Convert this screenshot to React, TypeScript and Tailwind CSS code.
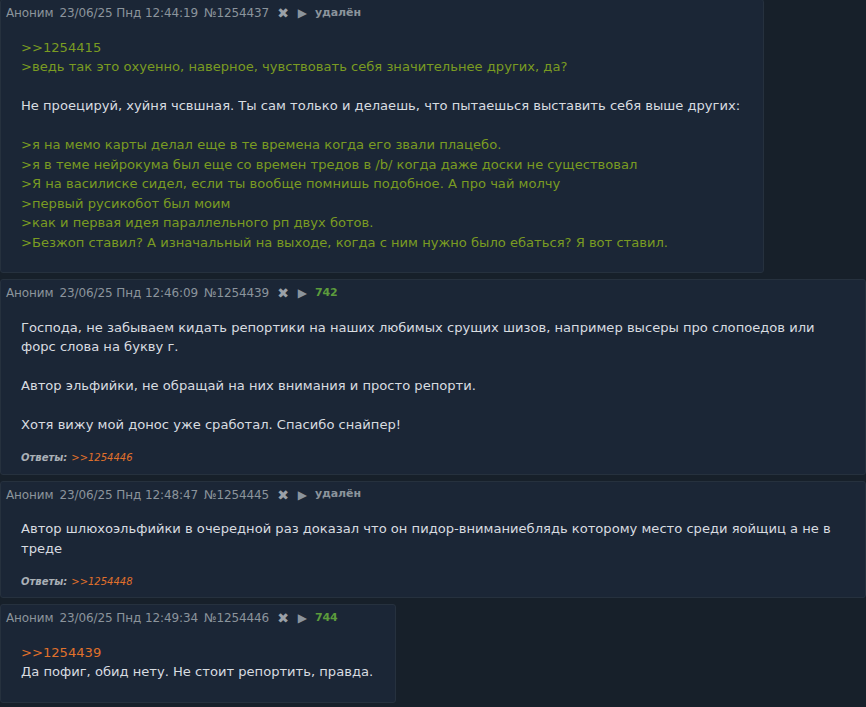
import type { ReactNode } from 'react'

type Line = { kind: 'text' | 'quote' | 'link' | 'blank'; text?: string }

type PostData = {
  num: string
  date: string
  status: { kind: 'deleted' } | { kind: 'count'; value: string }
  width: string
  lines: Line[]
  replies?: string[]
}

const posts: PostData[] = [
  {
    num: '1254437',
    date: '23/06/25 Пнд 12:44:19',
    status: { kind: 'deleted' },
    width: 'w-[764px]',
    lines: [
      { kind: 'quote', text: '>>1254415' },
      { kind: 'quote', text: '>ведь так это охуенно, наверное, чувствовать себя значительнее других, да?' },
      { kind: 'blank' },
      { kind: 'text', text: 'Не проецируй, хуйня чсвшная. Ты сам только и делаешь, что пытаешься выставить себя выше других:' },
      { kind: 'blank' },
      { kind: 'quote', text: '>я на мемо карты делал еще в те времена когда его звали плацебо.' },
      { kind: 'quote', text: '>я в теме нейрокума был еще со времен тредов в /b/ когда даже доски не существовал' },
      { kind: 'quote', text: '>Я на василиске сидел, если ты вообще помнишь подобное. А про чай молчу' },
      { kind: 'quote', text: '>первый русикобот был моим' },
      { kind: 'quote', text: '>как и первая идея параллельного рп двух ботов.' },
      { kind: 'quote', text: '>Безжоп ставил? А изначальный на выходе, когда с ним нужно было ебаться? Я вот ставил.' },
    ],
  },
  {
    num: '1254439',
    date: '23/06/25 Пнд 12:46:09',
    status: { kind: 'count', value: '742' },
    width: 'w-full',
    lines: [
      { kind: 'text', text: 'Господа, не забываем кидать репортики на наших любимых срущих шизов, например высеры про слопоедов или' },
      { kind: 'text', text: 'форс слова на букву г.' },
      { kind: 'blank' },
      { kind: 'text', text: 'Автор эльфийки, не обращай на них внимания и просто репорти.' },
      { kind: 'blank' },
      { kind: 'text', text: 'Хотя вижу мой донос уже сработал. Спасибо снайпер!' },
    ],
    replies: ['>>1254446'],
  },
  {
    num: '1254445',
    date: '23/06/25 Пнд 12:48:47',
    status: { kind: 'deleted' },
    width: 'w-full',
    lines: [
      { kind: 'text', text: 'Автор шлюхоэльфийки в очередной раз доказал что он пидор-вниманиеблядь которому место среди яойщиц а не в' },
      { kind: 'text', text: 'треде' },
    ],
    replies: ['>>1254448'],
  },
  {
    num: '1254446',
    date: '23/06/25 Пнд 12:49:34',
    status: { kind: 'count', value: '744' },
    width: 'w-[396px]',
    lines: [
      { kind: 'link', text: '>>1254439' },
      { kind: 'text', text: 'Да пофиг, обид нету. Не стоит репортить, правда.' },
    ],
  },
]

function BodyLine({ line }: { line: Line }) {
  if (line.kind === 'blank') return <div className="h-[19.5px]" />
  const color =
    line.kind === 'quote' ? 'text-[#7a9b22]' : line.kind === 'link' ? 'text-[#e0712b]' : 'text-[#d8dce0]'
  return <div className={`${color} whitespace-pre`}>{line.text}</div>
}

function Header({ post }: { post: PostData }): ReactNode {
  return (
    <div className="flex items-center gap-[6px] px-[5px] pt-[3px] h-[23px] text-[12px] tracking-[-0.1px] text-[#8b949c]">
      <span>Аноним</span>
      <span>{post.date}</span>
      <span>№{post.num}</span>
      <span className="text-[14px] leading-none text-[#9aa1a8] font-bold ml-[2px]">✖</span>
      <span className="text-[12px] leading-none text-[#8b949c] ml-[3px]">▶</span>
      {post.status.kind === 'deleted' ? (
        <span className="font-bold text-[#8b949c] text-[11px] ml-[2px]">удалён</span>
      ) : (
        <span className="font-bold text-[#5c9b3c] text-[11px] ml-[2px]">{post.status.value}</span>
      )}
    </div>
  )
}

function Post({ post }: { post: PostData }) {
  return (
    <div className={`${post.width} bg-[#1b2636] border border-[#26313e] rounded-[3px]`}>
      <Header post={post} />
      <div
        className={`mx-[20px] mt-[14.5px] text-[13.1px] leading-[19.5px] ${post.replies ? 'mb-[15px]' : 'mb-[20px]'}`}
      >
        {post.lines.map((l, i) => (
          <BodyLine key={i} line={l} />
        ))}
      </div>
      {post.replies && (
        <div className="mx-[20px] mb-[8px] h-[16px] flex items-center gap-[4px] italic text-[10px]">
          <span className="font-bold text-[#aab0b6]">Ответы:</span>
          {post.replies.map(r => (
            <span key={r} className="text-[#e0712b]">{r}</span>
          ))}
        </div>
      )}
    </div>
  )
}

export default function App() {
  return (
    <div
      className="w-[866px] h-[707px] overflow-hidden bg-[#17202a]"
      style={{ fontFamily: '"DejaVu Sans", Tahoma, sans-serif' }}
    >
      <div className="-mt-[1px] flex flex-col items-start gap-[6px]">
        {posts.map(p => (
          <Post key={p.num} post={p} />
        ))}
      </div>
    </div>
  )
}
